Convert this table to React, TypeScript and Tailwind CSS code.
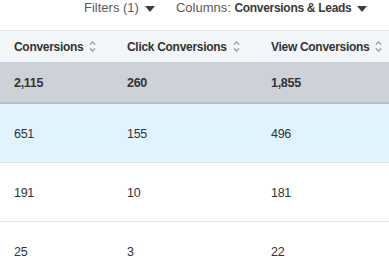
const COLUMNS = ["Conversions", "Click Conversions", "View Conversions"]

const ROWS = [
  { cells: ["651", "155", "496"], bg: "bg-[#e1f3fc]" },
  { cells: ["191", "10", "181"], bg: "bg-white" },
  { cells: ["25", "3", "22"], bg: "bg-white" },
]

function Caret() {
  return (
    <svg width="10" height="6" viewBox="0 0 10 6" className="ml-[6px] mt-[1px]">
      <path d="M0 0h10L5 6z" fill="#3b3b3b" />
    </svg>
  )
}

function SortIcon() {
  return (
    <svg width="7" height="13" viewBox="0 0 7 13" className="ml-[6px]">
      <path d="M0.8 4.6 3.5 1.8 6.2 4.6M0.8 8.4 3.5 11.2 6.2 8.4" fill="none" stroke="#8f969d" strokeWidth="1.2" />
    </svg>
  )
}

export default function App() {
  return (
    <div className="w-[389px] h-[264px] overflow-hidden bg-white font-['Liberation_Sans',sans-serif]">
      <div className="h-[30px] flex items-start pl-[84px] text-[13px] leading-[16px] text-[#5a5a5a]">
        <div className="flex items-center">
          Filters (1)
          <Caret />
        </div>
        <div className="flex items-center ml-[21px]">
          Columns:&nbsp;
          <span className="font-bold text-[12px] tracking-[-0.3px] text-[#3a3a3a]">Conversions &amp; Leads</span>
          <Caret />
        </div>
      </div>

      <div className="grid grid-cols-[113px_144px_1fr] h-[32px] items-center bg-[#f3f6f8] border-t border-[#e6e9ec] text-[12px] font-bold tracking-[-0.3px] text-[#333]">
        {COLUMNS.map((c) => (
          <div key={c} className="pl-[14px] flex items-center whitespace-nowrap">
            {c}
            <SortIcon />
          </div>
        ))}
      </div>

      <div className="grid grid-cols-[113px_144px_1fr] h-[42px] items-center pt-[2px] bg-[#ccd2d8] border-b-2 border-[#b8bfc6] text-[12.5px] font-bold tracking-[-0.3px] text-[#333]">
        {["2,115", "260", "1,855"].map((v, i) => (
          <div key={i} className="pl-[14px]">{v}</div>
        ))}
      </div>

      {ROWS.map((row, idx) => (
        <div
          key={idx}
          className={`grid grid-cols-[113px_144px_1fr] h-[59px] items-center pt-[3px] border-b border-[#dfe3e6] text-[12.5px] tracking-[-0.3px] text-[#333] ${row.bg}`}
        >
          {row.cells.map((v, i) => (
            <div key={i} className="pl-[14px]">{v}</div>
          ))}
        </div>
      ))}
    </div>
  )
}
